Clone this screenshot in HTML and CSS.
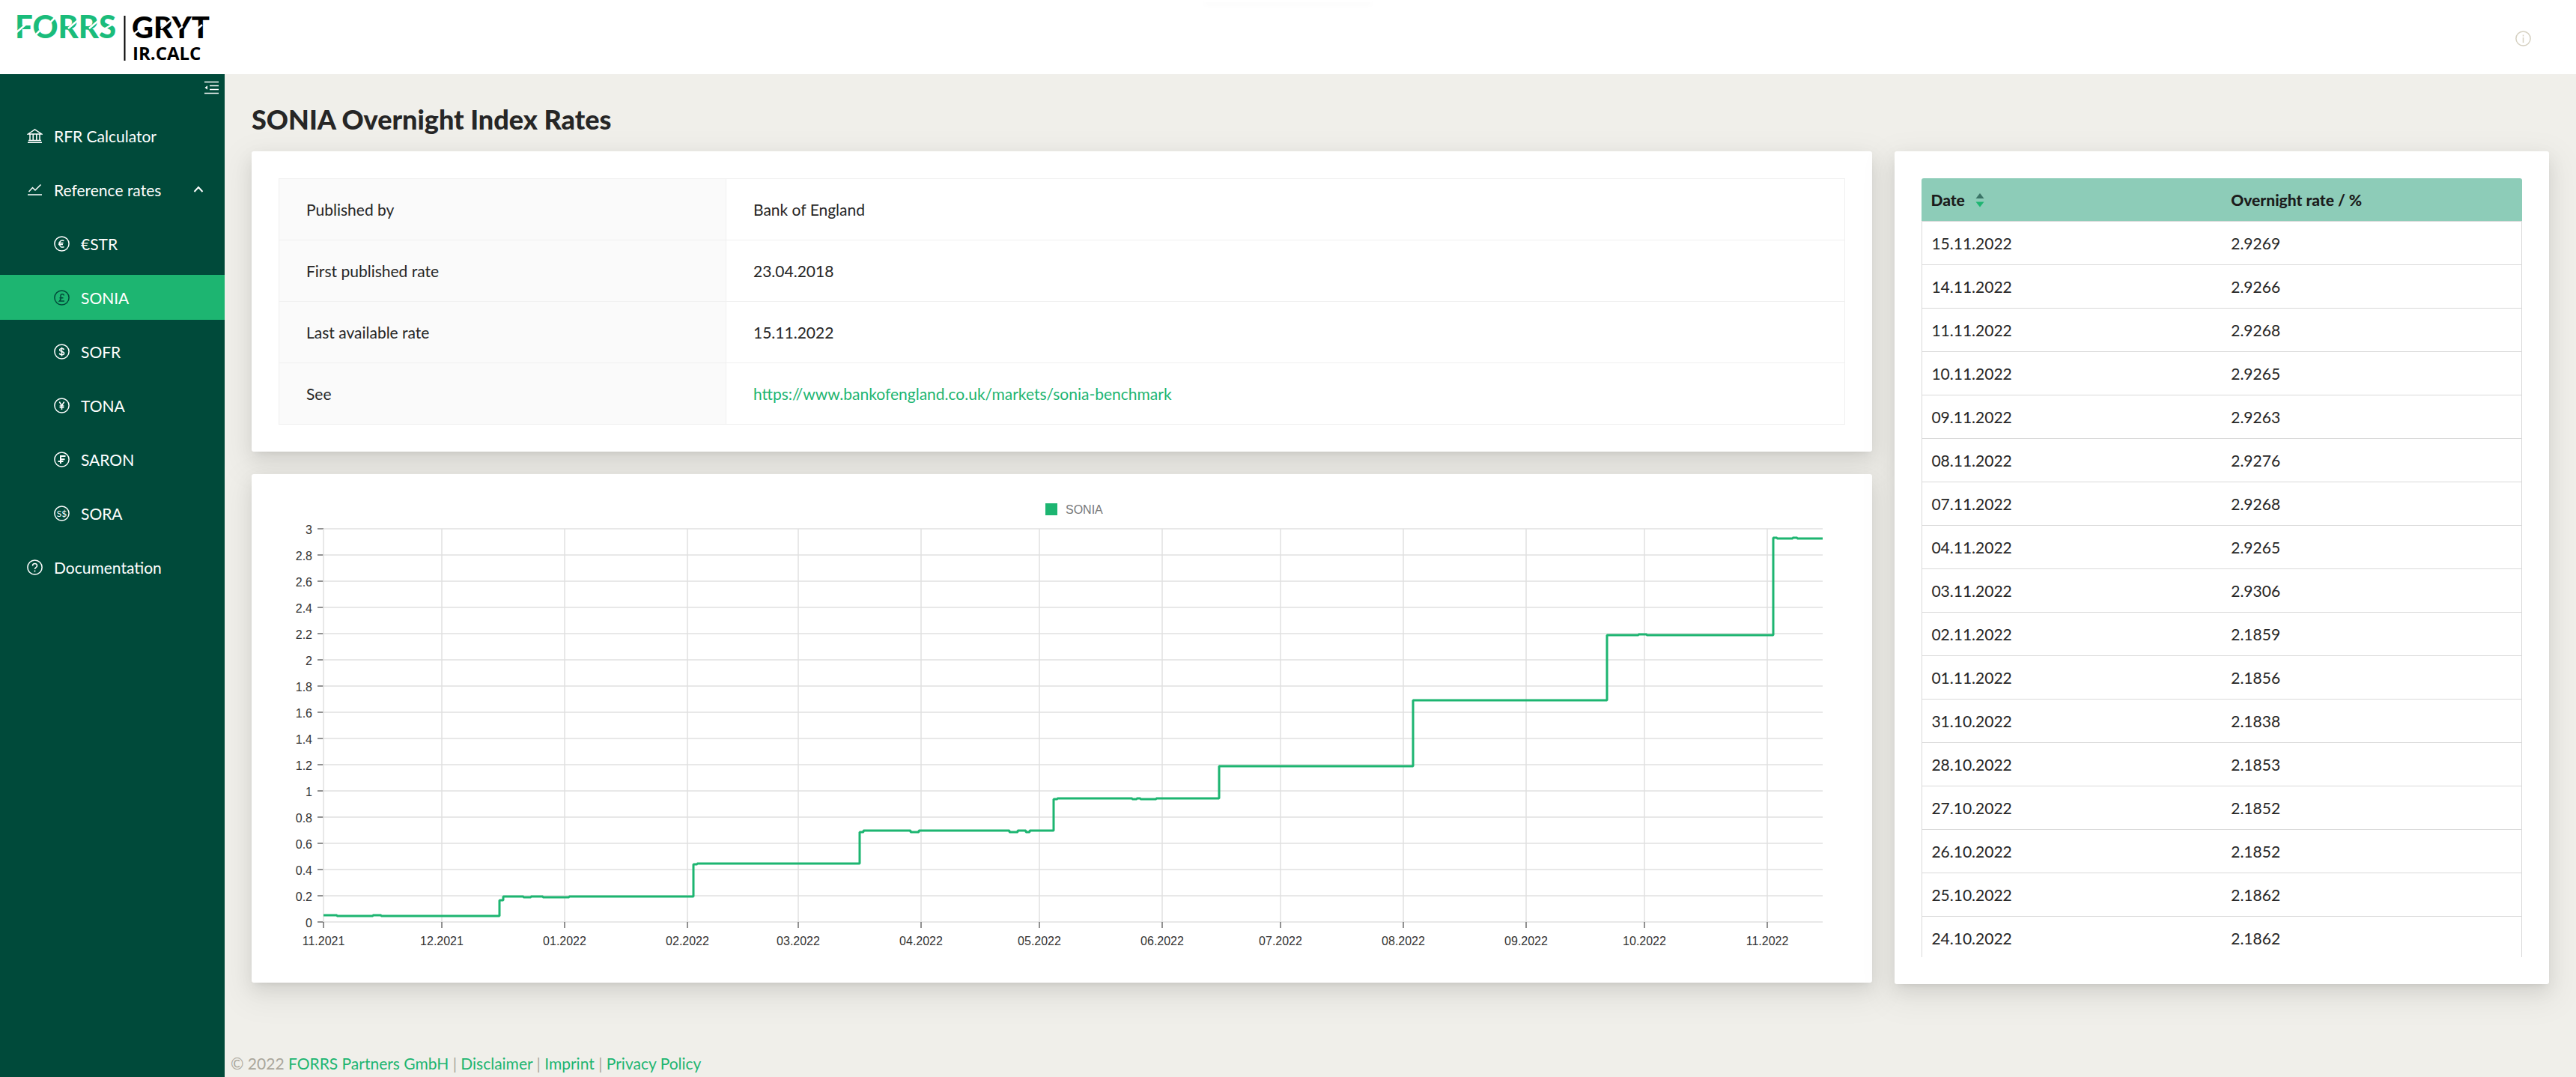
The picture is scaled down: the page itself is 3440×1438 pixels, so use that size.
FILE: index.html
```html
<!DOCTYPE html>
<html lang="en">
<head>
    <meta charset="UTF-8">
    <meta name="viewport" content="width=device-width, initial-scale=1.0">
    <title>SONIA Overnight Index Rates</title>
    <link rel="stylesheet" href="styles.css">
</head>
<body>
    <header class="header">
        <a href="#" class="logo">
            <svg width="280" height="85" viewBox="0 0 280 85" role="img" aria-label="FORRS GRYT IR.CALC">
                <text class="logo-green" x="4" y="44">FORRS</text>
                <text class="logo-black" x="160" y="44">GRYT</text>
                <text class="logo-sub" x="161" y="73">IR.CALC</text>
                <path class="logo-bar" d="M150.500 14v60"/>
                <path class="logo-cut" d="M5 37l13-11M50 24l8-8M29 42l8-8M75 31l13-11M103 31l13-11M121 33l16-9M162 39l9-7M199 31l13-11M219 35l9-7M244 35l10-9"/>
            </svg>
        </a>
        <button type="button" class="info" aria-label="Info">
            <svg class="icon" viewBox="0 0 21 21"><circle cx="10.500" cy="10.500" r="9.600"/><path d="M10.500 9v7M10.500 5.500v2"/></svg>
        </button>
    </header>

    <div class="layout">
        <aside class="sider">
            <button type="button" class="fold" aria-label="Collapse menu">
                <svg class="icon" viewBox="0 0 21 21"><path d="M1 2.500h19M8 7.500h12M8 12.500h12M1 17.500h19"/><path class="solid" d="M1.500 10L5 7.300v5.400z"/></svg>
            </button>
            <nav>
                <ul class="menu">
                    <li><a href="#" class="item">
                        <svg class="icon" viewBox="0 0 21 21"><path d="M1 19.300h19M2 16.500h17M1.500 8L10.500 2l9 6zM4 8v8.500M8.200 8v8.500M12.800 8v8.500M17 8v8.500"/></svg>
                        RFR Calculator</a></li>
                    <li>
                        <button type="button" class="item" aria-expanded="true">
                            <svg class="icon" viewBox="0 0 21 21"><path d="M1 17h19M2.500 13l5-5.500 3.500 3.500 7.500-7.500"/></svg>
                            Reference rates
                            <svg class="arrow" viewBox="0 0 14 14"><path d="M1.500 10L7 4l5.500 6"/></svg>
                        </button>
                        <ul class="submenu">
                            <li><a href="#" class="item">
                                <svg class="icon" viewBox="0 0 21 21"><circle cx="10.500" cy="10.500" r="9.600"/><path d="M13.500 6.500c-3-1.500-6 0-6 4s3 5.500 6 4M6 9.500h6.500M6 11.500h6"/></svg>
                                €STR</a></li>
                            <li><a href="#" class="item active">
                                <svg class="icon" viewBox="0 0 21 21"><circle cx="10.500" cy="10.500" r="9.600"/><path d="M13.500 7.500C13 5 9 5 9 7.800c0 2.200 1.500 4.500-1.500 7.200H14M7.500 10.800h5"/></svg>
                                SONIA</a></li>
                            <li><a href="#" class="item">
                                <svg class="icon" viewBox="0 0 21 21"><circle cx="10.500" cy="10.500" r="9.600"/><path d="M13.300 8c-.4-2.200-5.600-2.200-5.600.2 0 2.700 5.900 1.700 5.900 4.500 0 2.600-5.900 2.600-6.200 0M10.500 4.800v11.600"/></svg>
                                SOFR</a></li>
                            <li><a href="#" class="item">
                                <svg class="icon" viewBox="0 0 21 21"><circle cx="10.500" cy="10.500" r="9.600"/><path d="M7.300 5.500l3.200 5 3.200-5M10.500 10.500v5.500M7.600 11h5.800M7.600 13.300h5.800"/></svg>
                                TONA</a></li>
                            <li><a href="#" class="item">
                                <svg class="icon" viewBox="0 0 21 21"><circle cx="10.500" cy="10.500" r="9.600"/><path stroke-width="2" d="M15.500 6H9v10M9 10.300h5.500M5.500 13h7"/></svg>
                                SARON</a></li>
                            <li><a href="#" class="item">
                                <svg class="icon" viewBox="0 0 21 21"><circle cx="10.500" cy="10.500" r="9.600"/><text class="glyph" x="10.500" y="15">S$</text></svg>
                                SORA</a></li>
                        </ul>
                    </li>
                    <li><a href="#" class="item">
                        <svg class="icon" viewBox="0 0 21 21"><circle cx="10.500" cy="10.500" r="9.600"/><path d="M7.500 8.500c0-4 6-4 6 0 0 2.200-3 2-3 4.500M10.500 14.500v2"/></svg>
                        Documentation</a></li>
                </ul>
            </nav>
        </aside>

        <div class="content">
            <main>
                <h1>SONIA Overnight Index Rates</h1>
                <div class="row">
                    <div class="col-left">
                        <section class="card">
                            <table class="desc">
                                <tr><th scope="row">Published by</th><td>Bank of England</td></tr>
                                <tr><th scope="row">First published rate</th><td>23.04.2018</td></tr>
                                <tr><th scope="row">Last available rate</th><td>15.11.2022</td></tr>
                                <tr><th scope="row">See</th><td><a href="https://www.bankofengland.co.uk/markets/sonia-benchmark">https://www.bankofengland.co.uk/markets/sonia-benchmark</a></td></tr>
                            </table>
                        </section>
                        <section class="card">
                            <svg class="chart" id="chart" role="img" aria-label="SONIA"></svg>
                        </section>
                    </div>
                    <section class="card col-right">
                        <div class="scroll">
                            <table class="rates">
                                <thead>
                                    <tr>
                                        <th scope="col"><button type="button" class="sort">Date
                                            <svg width="12" height="20" viewBox="0 0 12 20"><path class="up" d="M6 1l5.500 7H.500z"/><path class="down" d="M6 19.500l5.500-7H.500z"/></svg>
                                        </button></th>
                                        <th scope="col">Overnight rate / %</th>
                                    </tr>
                                </thead>
                                <tbody>
                                    <tr><td>15.11.2022</td><td>2.9269</td></tr>
                                    <tr><td>14.11.2022</td><td>2.9266</td></tr>
                                    <tr><td>11.11.2022</td><td>2.9268</td></tr>
                                    <tr><td>10.11.2022</td><td>2.9265</td></tr>
                                    <tr><td>09.11.2022</td><td>2.9263</td></tr>
                                    <tr><td>08.11.2022</td><td>2.9276</td></tr>
                                    <tr><td>07.11.2022</td><td>2.9268</td></tr>
                                    <tr><td>04.11.2022</td><td>2.9265</td></tr>
                                    <tr><td>03.11.2022</td><td>2.9306</td></tr>
                                    <tr><td>02.11.2022</td><td>2.1859</td></tr>
                                    <tr><td>01.11.2022</td><td>2.1856</td></tr>
                                    <tr><td>31.10.2022</td><td>2.1838</td></tr>
                                    <tr><td>28.10.2022</td><td>2.1853</td></tr>
                                    <tr><td>27.10.2022</td><td>2.1852</td></tr>
                                    <tr><td>26.10.2022</td><td>2.1852</td></tr>
                                    <tr><td>25.10.2022</td><td>2.1862</td></tr>
                                    <tr><td>24.10.2022</td><td>2.1862</td></tr>
                                </tbody>
                            </table>
                        </div>
                    </section>
                </div>
            </main>
            <footer class="footer">
                © 2022 <a href="#">FORRS Partners GmbH</a> | <a href="#">Disclaimer</a> | <a href="#">Imprint</a> | <a href="#">Privacy Policy</a>
            </footer>
        </div>
    </div>
    <script src="chart.js"></script>
</body>
</html>
```
FILE: styles.css
```css
*{
    margin: 0;
    padding: 0;
    box-sizing: border-box;
}
body{
    min-height: 100vh;
    display: flex;
    flex-direction: column;
    background-color: #f0efea;
    color: #262626;
    font-family: Lato, "Open Sans", sans-serif;
    font-size: 21px;
    line-height: 33px;
}
a{
    color: #1db571;
    text-decoration: none;
}
ul{
    list-style: none;
}
button{
    border: none;
    background: transparent;
    color: inherit;
    font: inherit;
    text-align: left;
    cursor: pointer;
}
.icon{
    width: 21px;
    height: 21px;
    flex: none;
    fill: none;
    stroke: currentColor;
    stroke-width: 1.5;
}
.icon .solid{
    fill: currentColor;
    stroke: none;
}
.icon .glyph{
    fill: currentColor;
    stroke: none;
    font-size: 12px;
    text-anchor: middle;
}

/* header */
.header{
    position: relative;
    height: 99px;
    padding: 0 60px 0 16px;
    display: flex;
    align-items: center;
    justify-content: space-between;
    background-color: #fff;
}
.header::before{
    content: "";
    position: absolute;
    top: 0;
    left: 50%;
    width: 224px;
    height: 3px;
    margin-left: -112px;
    background-color: #fff;
    box-shadow: 0 3px 8px rgba(0, 0, 0, 0.04);
}
.logo svg{
    display: block;
    overflow: visible;
}
.logo-green,.logo-black{
    font-size: 42px;
    font-weight: 900;
    fill: #1abc7b;
}
.logo-black{
    font-size: 40px;
    fill: #000;
}
.logo-sub{
    font-family: "Open Sans", sans-serif;
    font-size: 24px;
    font-weight: 700;
    fill: #000;
}
.logo-bar{
    stroke: #000;
    stroke-width: 2;
}
.logo-cut{
    stroke: #fff;
    stroke-width: 2.5;
}
.info{
    display: flex;
    padding-top: 3px;
    color: #d5d0c0;
}

/* menu */
.layout{
    flex: 1;
    display: flex;
}
.sider{
    width: 300px;
    flex: none;
    background-color: #004a3a;
    color: #fff;
}
.fold{
    display: flex;
    margin-left: auto;
    padding: 8px 7px;
}
.menu{
    padding-top: 15px;
}
.item{
    width: 100%;
    height: 60px;
    margin-bottom: 12px;
    padding: 0 28px 0 36px;
    display: flex;
    align-items: center;
    gap: 15px;
    color: #fff;
}
.submenu .item{
    padding-left: 72px;
}
.active{
    background-color: #1db571;
}
.active .icon{
    color: #004a3a;
}
.arrow{
    width: 14px;
    height: 14px;
    margin-left: auto;
    fill: none;
    stroke: #fff;
    stroke-width: 2;
}

/* content */
.content{
    flex: 1;
    min-width: 0;
    display: flex;
    flex-direction: column;
    justify-content: space-between;
}
main{
    padding: 36px;
}
h1{
    margin-bottom: 18px;
    font-size: 36px;
    line-height: 49px;
    font-weight: 900;
}
.row{
    display: grid;
    grid-template-columns: repeat(24, minmax(0, 1fr));
    column-gap: 30px;
    align-items: start;
}
.col-left{
    grid-column: span 17;
    display: grid;
    gap: 30px;
}
.col-right{
    grid-column: span 7;
}
.card{
    padding: 36px;
    background-color: #fff;
    border-radius: 3px;
    box-shadow: 0 5px 9px -6px rgba(0, 0, 0, 0.12), 0 9px 24px rgba(0, 0, 0, 0.08), 0 14px 42px 12px rgba(0, 0, 0, 0.05);
}
.desc{
    width: 100%;
    border-collapse: collapse;
}
.desc th,.desc td{
    height: 82px;
    padding: 0 36px;
    border: 1px solid #f0f0f0;
    text-align: left;
    font-weight: 400;
}
.desc th{
    width: 597px;
    background-color: #fafafa;
}

/* chart */
.chart{
    display: block;
    width: 100%;
    height: 607px;
    font-family: "Liberation Sans", Arial, sans-serif;
    font-size: 16px;
}
.grid{
    stroke: #e0e0e0;
    stroke-width: 1.5;
}
.tick{
    stroke: #6e6e6e;
    stroke-width: 1.5;
}
.chart text{
    fill: #333;
    text-anchor: middle;
}
.chart .y-label{
    text-anchor: end;
}
.chart .legend{
    fill: #777;
    text-anchor: start;
}
.swatch{
    fill: #1db571;
}
.line{
    fill: none;
    stroke: #1db571;
    stroke-width: 3;
    stroke-linejoin: bevel;
}

/* rates */
.scroll{
    max-height: 1040px;
    overflow-y: auto;
    scrollbar-width: none;
}
.rates{
    width: 100%;
    table-layout: fixed;
    border-spacing: 0;
}
.rates th,.rates td{
    height: 58px;
    padding: 0 12px;
    border-bottom: 1px solid #d9d9d9;
    text-align: left;
}
.rates th{
    position: sticky;
    top: 0;
    background-color: #8dccb8;
    color: #1c1c1c;
    font-weight: 900;
}
.rates th:first-child{
    border-top-left-radius: 3px;
}
.rates th:last-child{
    border-top-right-radius: 3px;
}
.rates td:first-child{
    border-left: 1px solid #d9d9d9;
}
.rates td:last-child{
    border-right: 1px solid #d9d9d9;
}
.sort{
    display: flex;
    align-items: center;
    gap: 14px;
}
.up{
    fill: #3b7467;
}
.down{
    fill: #1db571;
}

.footer{
    padding: 0 8px 2px;
    color: #aaa69b;
}
```
FILE: chart.js
```js
var chart = document.getElementById("chart");

// [days since 01.11.2021, rate]
var rates = [
    [0, 0.051], [3.5, 0.045], [12.5, 0.051], [14.5, 0.045],
    [44.5, 0.163], [45.5, 0.197], [50.5, 0.191], [52.5, 0.197], [55.5, 0.191], [62, 0.197],
    [93.5, 0.439], [94.5, 0.446], [135.5, 0.687], [136.5, 0.695], [148.5, 0.687], [150.5, 0.695],
    [173.5, 0.687], [175.5, 0.695], [177.5, 0.687], [178.5, 0.695],
    [184.5, 0.937], [185.5, 0.945], [204.5, 0.937], [205.5, 0.945], [206.5, 0.937], [210.5, 0.945],
    [226.5, 1.191], [275.5, 1.69], [324.5, 2.188], [332.5, 2.196], [334.5, 2.188],
    [366.5, 2.933], [367.5, 2.925], [371.5, 2.933], [372.5, 2.925]
];
var months = [
    [0, "11.2021"], [30, "12.2021"], [61, "01.2022"], [92, "02.2022"], [120, "03.2022"],
    [151, "04.2022"], [181, "05.2022"], [212, "06.2022"], [242, "07.2022"], [273, "08.2022"],
    [304, "09.2022"], [334, "10.2022"], [365, "11.2022"]
];
var days = 379;

function draw() {
    var left = 60, top = 37, bottom = 562;
    var right = chart.clientWidth - 30;
    var out = "";

    function px(day) {
        return Math.round(left + day / days * (right - left));
    }
    function py(rate) {
        return Math.round(bottom - rate / 3 * (bottom - top));
    }

    for (var i = 0; i <= 15; i++) {
        var y = py(i / 5);
        out += '<path class="grid" d="M' + left + ' ' + y + 'H' + right + '"/>';
        out += '<path class="tick" d="M' + (left - 8) + ' ' + y + 'H' + left + '"/>';
        out += '<text class="y-label" x="' + (left - 15) + '" y="' + (y + 7) + '">' + i * 2 / 10 + '</text>';
    }
    months.forEach(function (m) {
        var x = px(m[0]);
        out += '<path class="grid" d="M' + x + ' ' + top + 'V' + bottom + '"/>';
        out += '<path class="tick" d="M' + x + ' ' + bottom + 'v8"/>';
        out += '<text x="' + x + '" y="' + (bottom + 31) + '">' + m[1] + '</text>';
    });

    // step line
    var d = "M" + left + " " + py(rates[0][1]);
    rates.forEach(function (r) {
        d += "H" + px(r[0]) + "V" + py(r[1]);
    });
    out += '<path class="line" d="' + d + 'H' + right + '"/>';

    var middle = Math.round((left + right) / 2);
    out += '<rect class="swatch" x="' + (middle - 37) + '" y="3" width="16" height="16"/>';
    out += '<text class="legend" x="' + (middle - 10) + '" y="17">SONIA</text>';

    chart.innerHTML = out;
}

draw();
window.addEventListener("resize", draw);
```
